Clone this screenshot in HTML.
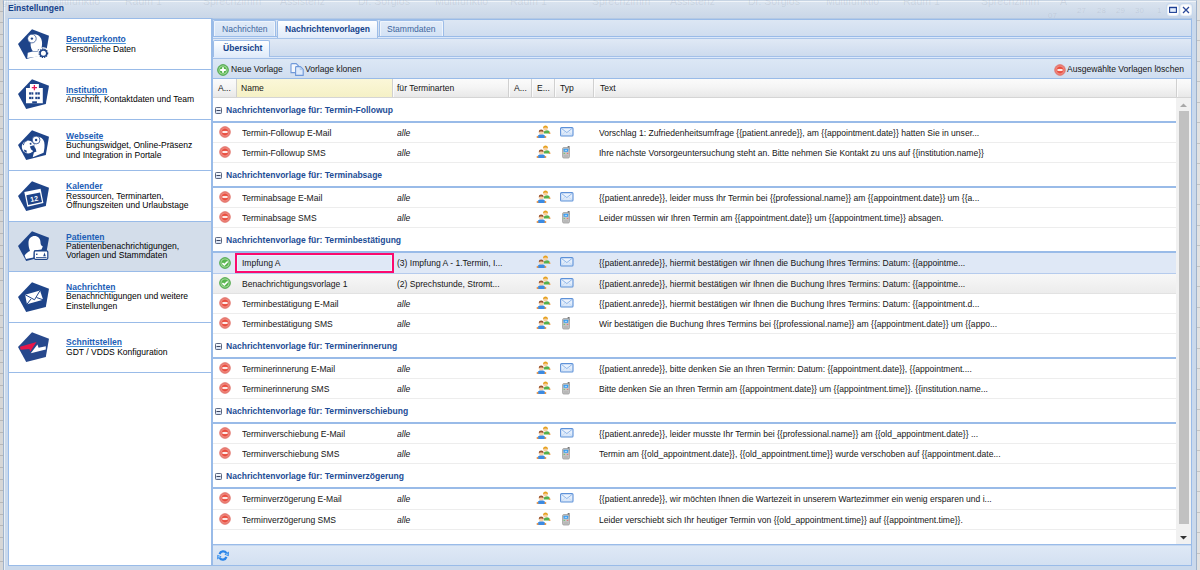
<!DOCTYPE html>
<html><head><meta charset="utf-8">
<style>
*{box-sizing:border-box;margin:0;padding:0}
html,body{width:1200px;height:570px;overflow:hidden}
body{position:relative;background:#dedede;font-family:"Liberation Sans",sans-serif;font-size:8.55px;color:#000}
#bgtxt{position:absolute;left:0;top:0;width:1200px;height:18px;overflow:hidden;pointer-events:none}
#bgtxt span{position:absolute;top:-5px;line-height:12px;font-size:10.5px;color:rgba(90,100,115,.13);white-space:nowrap}
#win{position:absolute;left:3px;top:0;width:1194px;height:590px;background:linear-gradient(rgba(218,228,240,.93),rgba(200,214,232,.95) 17px,#cad9ec 19px,#cad9ec);border:1px solid #9fb3cc;border-top-color:#c7d4e3;box-shadow:inset 1px 1px 0 rgba(255,255,255,.6)}
#title{position:absolute;left:4px;top:2px;font-weight:bold;color:#15428b;line-height:10px}
.tool{position:absolute;top:3px;width:12px;height:12px;border-radius:3px;background:#fff;box-shadow:0 0 0 1px #c7d8ee,inset 0 0 2px #bcd}
#left{position:absolute;left:8px;top:18px;width:204px;height:548px;background:#fff;border:1px solid #99bbe8;overflow:hidden}
.item{position:absolute;left:-1px;width:204px;border-bottom:1px solid #99bbe8}
.item.sel{background:#d3ddea}
.pic{position:absolute}
.ltxt{position:absolute;left:57px;line-height:10px;color:#000;white-space:nowrap}
.ltxt b{color:#1c5db6;text-decoration:underline;text-decoration-color:#4d94d8}
#right{position:absolute;left:212px;top:18px;width:980px;height:548px;border:1px solid #99bbe8;border-top-color:#b4c9e4;background:#fff}
.strip{position:absolute;left:0;width:978px}
.line{position:absolute;left:0;width:978px;height:1px}
.tab{position:absolute;border:1px solid #9dbde8;border-bottom:none;border-radius:2px 2px 0 0;background:linear-gradient(#e1ebf8,#d3e2f5);color:#3d66a0;line-height:10px;padding-top:3px;white-space:nowrap;box-shadow:inset 1px 1px 0 #eef4fc,inset -1px 0 0 #eef4fc}
.tab.act{background:linear-gradient(#ffffff,#edf4fd 50%,#e0ebfa);color:#15428b;font-weight:bold;box-shadow:none}
#tb{position:absolute;left:0;top:40px;width:978px;height:20px;background:linear-gradient(#dce7f5,#d0def0);border-bottom:1px solid #99bbe8}
.tbt{position:absolute;top:1px;height:19px;line-height:19px;color:#151515;white-space:nowrap}
#hd{position:absolute;left:0;top:60px;width:978px;height:19px;background:linear-gradient(#fbfbfb,#f5f5f5 45%,#e8e8e8);border-bottom:1px solid #d5d5d5}
.hc{position:absolute;top:0;height:18px;line-height:18px;padding-left:5px;color:#151515;border-right:1px solid #d0d0d0;box-shadow:1px 0 0 #fbfbfb;white-space:nowrap}
.hc.sort{background:linear-gradient(#fbf7d8,#f5f1c6)}
#body{position:absolute;left:0;top:79px;width:963px;height:446px;background:#fff;overflow:hidden}
.grp{position:absolute;left:0;width:963px;border-bottom:2px solid #99bbe8;color:#1d4d96;font-weight:bold}
.grp span{position:absolute;left:13px;line-height:10px;white-space:nowrap}
.coll{position:absolute;left:2px}
.ic0{position:absolute;left:6px;top:2.5px}
.row.sel .ic0{top:3.5px}
.ic4{position:absolute;left:323px;top:2px}
.ic5m{position:absolute;left:347px;top:4px}
.ic5s{position:absolute;left:349px;top:3px}
.row{position:absolute;left:0;width:963px;border-bottom:1px solid #ededed}
.row.sel{background:#dfe8f6;border-bottom-color:#b5cbed}
.row.hov{background:linear-gradient(#f7f7f7,#ececec);border-bottom-color:#e2e2e2}
.c{position:absolute;top:0;bottom:0;white-space:nowrap;overflow:hidden;display:flex;align-items:center;color:#151515}
.c0{left:0;width:24px;justify-content:center}
.c1{left:29px;width:150px}
.c2{left:184px;width:111px}
.c2.it{font-style:italic}
.c4{left:324px;width:14px;justify-content:center}
.c5{left:346px;width:14px;justify-content:center}
.c6{left:386px;width:576px}
.selbox{position:absolute;left:22px;top:0;width:159px;height:100%;border:2px solid #fb0a6e;box-shadow:inset 0 0 0 1px #e4f6fd}
#vs{position:absolute;left:963px;top:79px;width:15px;height:446px;background:#f1f1f1}
#pbar{position:absolute;left:0;top:525px;width:978px;height:21px;background:linear-gradient(#dfe9f6,#d3e0f1);border-top:1px solid #99bbe8;box-shadow:inset 0 1px 0 #c5d8f1}
</style></head><body>

<svg width="0" height="0" style="position:absolute"><defs>
<radialGradient id="rg" cx="50%" cy="50%" r="50%"><stop offset="0" stop-color="#f0705f"/><stop offset="0.5" stop-color="#e84a3c"/><stop offset="0.72" stop-color="#ef8a80"/><stop offset="1" stop-color="#e26a63"/></radialGradient>
<radialGradient id="gg" cx="50%" cy="50%" r="50%"><stop offset="0" stop-color="#5fbd55"/><stop offset="0.55" stop-color="#55b34b"/><stop offset="0.75" stop-color="#a3d99c"/><stop offset="1" stop-color="#52ac4c"/></radialGradient>
</defs></svg>
<div style="position:absolute;left:0;top:0;width:3px;height:570px;background:repeating-linear-gradient(#d6d6d6 0,#d6d6d6 10.7px,#b8b8b8 10.7px,#b8b8b8 11.7px)"></div>
<div style="position:absolute;left:1196px;top:0;width:4px;height:570px;background:repeating-linear-gradient(#e2e2e2 0,#e2e2e2 19.5px,#c4c4c4 19.5px,#c4c4c4 20.5px)"></div>
<div id="win">
  <div id="title">Einstellungen</div>
  <div class="tool" style="left:1163px"><svg width="12" height="12" viewBox="0 0 12 12"><rect x="2.6" y="3.4" width="6.8" height="5" fill="#e4eefc" stroke="#1c3f94" stroke-width="1.1"/><rect x="2.1" y="2.9" width="7.8" height="1.3" fill="#1c3f94"/></svg></div>
  <div class="tool" style="left:1176px"><svg width="12" height="12" viewBox="0 0 12 12"><path d="M3,3 L9,9 M9,3 L3,9" stroke="#2b4a9a" stroke-width="1.3"/></svg></div>
</div>

<div id="bgtxt"><span style="left:-31px">Dr. Sorglos</span><span style="left:47px">Multifunktio</span><span style="left:125px">Raum 1</span><span style="left:203px">Sprechzimm</span><span style="left:280px">Assistenz</span><span style="left:358px">Dr. Sorglos</span><span style="left:435px">Multifunktio</span><span style="left:510px">Raum 1</span><span style="left:592px">Sprechzimm</span><span style="left:670px">Assistenz</span><span style="left:748px">Dr. Sorglos</span><span style="left:826px">Multifunktio</span><span style="left:903px">Raum 1</span><span style="left:981px">Sprechzimm</span><span style="left:1060px">A</span><span style="left:1077px;top:5px;font-size:8px">27</span><span style="left:1097px;top:5px;font-size:8px">28</span><span style="left:1116px;top:5px;font-size:8px">29</span><span style="left:1135px;top:5px;font-size:8px">30</span><span style="left:1157px;top:5px;font-size:8px">1</span><span style="left:1048px;top:10px;font-size:8px">07</span></div>
<div id="left">
<div class="item" style="top:0px;height:51px"></div>
<svg class="pic" width="34" height="34" viewBox="0 0 34 34" style="left:8px;top:8.50px"><polygon points="15,1.3 32,7.7 28.8,26 9.2,31 1,16" fill="#1e4489"/>
  <path d="M14.5,6.6 C17.5,5.6 22.5,6.4 24.2,10.8 C25.5,14 25.2,18 24.4,20.5 L20.8,21.5 L20.8,23 L15.8,23 C14.6,21.6 13.4,19 13.6,15.5 Z" fill="#fff"/>
  <path d="M10.8,24.8 L15.6,23.4 L21.2,23.6 L21.2,28.5 L10.2,29.9 Z" fill="#fff"/>
  <circle cx="14.9" cy="10.6" r="4.3" fill="#fff" stroke="#1e4489" stroke-width="0.7"/>
  <circle cx="14.9" cy="10.6" r="1.2" fill="#1e4489"/>
  <circle cx="26.4" cy="25.2" r="5.9" fill="#fff"/>
  <circle cx="26.4" cy="25.2" r="4.1" fill="none" stroke="#1e4489" stroke-width="1.5" stroke-dasharray="1.3 0.9"/>
  <circle cx="26.4" cy="25.2" r="3.2" fill="none" stroke="#1e4489" stroke-width="1.4"/>
  <circle cx="26.4" cy="25.2" r="1.9" fill="#fff"/></svg>
<div class="ltxt" style="top:15px"><b>Benutzerkonto</b></div>
<div class="ltxt" style="top:25px">Persönliche Daten</div>
<div class="item" style="top:51px;height:50px"></div>
<svg class="pic" width="34" height="34" viewBox="0 0 34 34" style="left:8px;top:59.00px"><polygon points="15,1.3 32,7.7 28.8,26 9.2,31 1,16" fill="#1e4489"/>
  <path d="M12.9,5.9 H21.9 V10.1 H25.8 V25.3 H9 V10.1 H12.9 Z" fill="#fff"/>
  <path d="M17.4,7 V12.2 M14.8,9.6 H20" stroke="#e3175b" stroke-width="1.3"/>
  <rect x="12.1" y="14.3" width="4.2" height="2.3" fill="#1e4489"/><rect x="18.3" y="14.3" width="4.5" height="2.3" fill="#1e4489"/>
  <rect x="12.1" y="18.8" width="4.2" height="2.3" fill="#1e4489"/><rect x="18.3" y="18.8" width="4.5" height="2.3" fill="#1e4489"/>
  <rect x="14.1" y="14.3" width="0.4" height="6.8" fill="#fff"/><rect x="20.4" y="14.3" width="0.4" height="6.8" fill="#fff"/>
  <rect x="15.2" y="23.3" width="4.7" height="2" fill="#1e4489"/></svg>
<div class="ltxt" style="top:66px"><b>Institution</b></div>
<div class="ltxt" style="top:75px">Anschrift, Kontaktdaten und Team</div>
<div class="item" style="top:101px;height:51px"></div>
<svg class="pic" width="34" height="34" viewBox="0 0 34 34" style="left:8px;top:109.50px"><polygon points="15,1.3 32,7.7 28.8,26 9.2,31 1,16" fill="#1e4489"/>
  <path d="M17,8.6 C21,6.6 26,8.6 27.2,13 C28,17 27.3,21 26.6,23.8 L15.7,28.2 L16.9,23.6 L19.5,22.5 L17.5,17 Z" fill="#fff"/>
  <circle cx="11.2" cy="18" r="6.4" fill="#fff"/>
  <path d="M6.3,16.2 C6.8,14 8.2,12.4 10,11.6" fill="none" stroke="#1e4489" stroke-width="0.9"/>
  <path d="M12.6,14.2 L14.2,13.6 L14.6,15.4 L13,15.8 Z M12.8,17.6 L16.6,16.2 L18.8,20.8 L16.4,22.2 L14.2,20.6 Z M6.8,20.6 L9.6,21.6 L9.8,23.8 L7.6,23 Z" fill="#1e4489"/>
  <circle cx="19.1" cy="11" r="3.9" fill="#fff" stroke="#1e4489" stroke-width="0.8"/>
  <circle cx="19.1" cy="11" r="1.2" fill="#1e4489"/></svg>
<div class="ltxt" style="top:112px"><b>Webseite</b></div>
<div class="ltxt" style="top:121px">Buchungswidget, Online-Präsenz</div>
<div class="ltxt" style="top:131px">und Integration in Portale</div>
<div class="item" style="top:152px;height:51px"></div>
<svg class="pic" width="34" height="34" viewBox="0 0 34 34" style="left:8px;top:160.50px"><polygon points="15,1.3 32,7.7 28.8,26 9.2,31 1,16" fill="#1e4489"/>
  <polygon points="7.3,12.1 23.6,8.8 26.4,23.1 10.4,26.7" fill="#fff"/>
  <polygon points="9.3,15.2 23,12.4 25,22 11.2,25.1" fill="#1e4489"/>
  <text x="17.1" y="21.4" font-family="Liberation Sans" font-weight="bold" font-size="7" fill="#fff" text-anchor="middle" transform="rotate(-12 17 18.6)">12</text></svg>
<div class="ltxt" style="top:162px"><b>Kalender</b></div>
<div class="ltxt" style="top:172px">Ressourcen, Terminarten,</div>
<div class="ltxt" style="top:181px">Öffnungszeiten und Urlaubstage</div>
<div class="item sel" style="top:203px;height:50px"></div>
<svg class="pic" width="34" height="34" viewBox="0 0 34 34" style="left:8px;top:211.00px"><polygon points="15,1.3 32,7.7 28.8,26 9.2,31 1,16" fill="#1e4489"/>
  <path d="M11.5,13 C11.5,8 14.5,6 17.5,6 C21,6 23.5,8.5 23.5,12.5 C23.5,14 24,15.5 25.8,16.6 L24.5,19.5 L17,20.5 L16.5,27.5 L9,29 L7.6,25.5 C9.5,23 11.5,21.5 13,21 C12,18.5 11.5,16 11.5,13 Z" fill="#fff"/>
  <rect x="17.2" y="20.9" width="13.6" height="8.4" rx="1.2" fill="#fff" stroke="#1e4489" stroke-width="1.2"/>
  <rect x="19" y="23.6" width="1.5" height="1.3" fill="#1e4489"/>
  <path d="M27.5,22.6 L26.2,26.2 L28.8,26.2 Z" fill="#1e4489"/>
  <rect x="19" y="27.2" width="10.5" height="0.8" fill="#1e4489"/></svg>
<div class="ltxt" style="top:213px"><b>Patienten</b></div>
<div class="ltxt" style="top:222px">Patientenbenachrichtigungen,</div>
<div class="ltxt" style="top:231px">Vorlagen und Stammdaten</div>
<div class="item" style="top:253px;height:51px"></div>
<svg class="pic" width="34" height="34" viewBox="0 0 34 34" style="left:8px;top:261.50px"><polygon points="15,1.3 32,7.7 28.8,26 9.2,31 1,16" fill="#1e4489"/>
  <polygon points="8.1,13.7 23,9.6 26.1,18.8 10,23.2" fill="#fff"/>
  <path d="M8.1,13.7 L17.5,18.8 L23,9.6 M10,23.2 L14,18 M26.1,18.8 L19.5,16.5" fill="none" stroke="#1e4489" stroke-width="1"/></svg>
<div class="ltxt" style="top:263px"><b>Nachrichten</b></div>
<div class="ltxt" style="top:272px">Benachrichtigungen und weitere</div>
<div class="ltxt" style="top:282px">Einstellungen</div>
<div class="item" style="top:304px;height:50px"></div>
<svg class="pic" width="34" height="34" viewBox="0 0 34 34" style="left:8px;top:312.00px"><polygon points="15,1.3 32,7.7 28.8,26 9.2,31 1,16" fill="#27488c"/>
  <polygon points="3,15.8 19.5,11 13.2,20.5 12.4,18 3.6,18.8" fill="#e8174a"/>
  <polygon points="13.8,22.2 20.4,13.6 21.6,16.7 28.8,15.2 28.8,18.5" fill="#fff"/></svg>
<div class="ltxt" style="top:318px"><b>Schnittstellen</b></div>
<div class="ltxt" style="top:328px">GDT / VDDS Konfiguration</div>
</div>

<div id="right">
  <div class="strip" style="top:0;height:40px;background:linear-gradient(#dde7f4,#cfddef 17px,#e0e9f5 20px,#cddbee 37px)"></div>
  <div class="line" style="top:0;background:#99bbe8"></div>
  <div class="line" style="top:17px;background:#99bbe8"></div>
  <div class="line" style="top:18px;background:#dce8f9"></div>
  <div class="line" style="top:19px;background:#a9c5ea"></div>
  <div class="line" style="top:37px;background:#a3c0e8"></div>
  <div class="line" style="top:38px;background:#dde9fb"></div>
  <div class="line" style="top:39px;background:#a3c0e8"></div>
  <div class="tab" style="left:0;top:1px;width:63px;height:17px;padding-left:8px;border-bottom:1px solid #99bbe8">Nachrichten</div>
  <div class="tab act" style="left:64px;top:1px;width:101px;height:18px;padding-left:7px">Nachrichtenvorlagen</div>
  <div class="tab" style="left:166px;top:1px;width:65px;height:17px;padding-left:7px;border-bottom:1px solid #99bbe8">Stammdaten</div>
  <div class="tab act" style="left:0;top:21px;width:57px;height:17px;padding-left:9px;padding-top:2px">Übersicht</div>
  <div id="tb">
    <svg class="pic" width="12" height="12" viewBox="0 0 12 12" style="left:4px;top:5px"><circle cx="6" cy="6" r="5.4" fill="url(#gg)" stroke="#47a443" stroke-width="0.8"/><path d="M6,3.2 V8.8 M3.2,6 H8.8" stroke="#fff" stroke-width="1.8"/></svg>
    <div class="tbt" style="left:18px">Neue Vorlage</div>
    <svg class="pic" width="15" height="14" viewBox="0 0 15 14" style="left:77px;top:4px"><path d="M1,9.6 V1.6 Q1,0.6 2,0.6 H6.2 L8.4,2.8 V9.6 Z" fill="#f3f7fd" stroke="#7099d9" stroke-width="1.1"/><path d="M5.6,12.4 V4.4 Q5.6,3.6 6.4,3.6 H10.4 L13.2,6.4 V12.4 Z" fill="#deeafb" stroke="#6d97d8" stroke-width="1.1"/><path d="M10.2,3.8 V6.6 H13" fill="none" stroke="#9fbfea" stroke-width="0.8"/></svg>
    <div class="tbt" style="left:92px">Vorlage klonen</div>
    <svg class="pic" width="12" height="12" viewBox="0 0 12 12" style="left:841px;top:5px"><circle cx="6" cy="6" r="5.4" fill="url(#rg)" stroke="#e3776f" stroke-width="0.7"/><rect x="3.4" y="5.15" width="5.2" height="1.7" fill="#fff"/></svg>
    <div class="tbt" style="left:854px">Ausgewählte Vorlagen löschen</div>
  </div>
  <div id="hd">
    <div class="hc" style="left:0;width:24px">A...</div>
    <div class="hc sort" style="left:24px;width:156px;padding-left:4px">Name</div>
    <div class="hc" style="left:180px;width:116px;padding-left:4px">für Terminarten</div>
    <div class="hc" style="left:296px;width:23px">A...</div>
    <div class="hc" style="left:319px;width:23px">E...</div>
    <div class="hc" style="left:342px;width:39px">Typ</div>
    <div class="hc" style="left:381px;width:583px;padding-left:6px">Text</div>
  </div>
  <div id="body">
<div class="grp" style="top:0px;height:25px"><svg class="coll" width="7" height="7" viewBox="0 0 7 7" style="top:9px"><defs><linearGradient id="cg" x1="0" y1="0" x2="0" y2="1"><stop offset="0" stop-color="#fbfcfe"/><stop offset="1" stop-color="#cfdcf3"/></linearGradient></defs><rect x="0.5" y="0.5" width="6" height="6" rx="0.8" fill="url(#cg)" stroke="#5b6781"/><rect x="1.5" y="3" width="4" height="1" fill="#3c4660"/></svg><span style="top:7px">Nachrichtenvorlage für: Termin-Followup</span></div>
<div class="row " style="top:25px;height:20px"><svg class="ic0" width="12" height="12" viewBox="0 0 12 12"><circle cx="6" cy="6" r="5.4" fill="url(#rg)" stroke="#e3776f" stroke-width="0.7"/><rect x="3.4" y="5.15" width="5.2" height="1.7" fill="#fff"/></svg><div class="c c1"><span>Termin-Followup E-Mail</span></div><div class="c c2 ta it"><span>alle</span></div><svg class="ic4" width="15" height="14" viewBox="0 0 15 14"><path d="M7.6,8.5 C7.6,6.2 8.8,5.3 10.8,5.3 C12.8,5.3 14,6.2 14,8.5 Z" fill="#56b04d"/><circle cx="13.6" cy="8.2" r="0.9" fill="#f0a050"/><circle cx="9.5" cy="3.2" r="2.3" fill="#f8cf9f"/><path d="M7.1,3.2 C7,1.3 8.2,0.5 9.5,0.5 C10.9,0.5 12,1.3 11.9,3.2 C11,2.2 8.2,2.2 7.1,3.2Z" fill="#e5a11f"/><path d="M1.2,13 C1.2,10.4 2.8,9.2 5.4,9.2 C8,9.2 9.7,10.4 9.7,13 Z" fill="#3b8be3"/><circle cx="1.5" cy="12" r="1" fill="#ef9746"/><circle cx="9.4" cy="12" r="1" fill="#ef9746"/><circle cx="5.2" cy="7.3" r="2.3" fill="#f9d0a4"/><path d="M2.8,7.3 C2.7,5.3 3.9,4.6 5.2,4.6 C6.6,4.6 7.7,5.3 7.6,7.3 C6.8,6.2 3.8,6.2 2.8,7.3Z" fill="#98532e"/></svg><svg class="ic5m" width="14" height="10" viewBox="0 0 14 10"><defs><linearGradient id="mg" x1="0" y1="0" x2="0" y2="1"><stop offset="0" stop-color="#f2f7fe"/><stop offset="1" stop-color="#d4e4f8"/></linearGradient></defs><rect x="0.6" y="0.6" width="12.4" height="8.4" rx="1" fill="url(#mg)" stroke="#5d91d8" stroke-width="1.1"/><path d="M1.3,1.3 L6.8,5.6 L12.3,1.3" fill="none" stroke="#86b0e6" stroke-width="0.9"/><path d="M1.3,8.4 L5,5 M12.3,8.4 L8.6,5" fill="none" stroke="#b9d2f2" stroke-width="0.6"/></svg><div class="c c6"><span>Vorschlag 1: Zufriedenheitsumfrage {{patient.anrede}}, am {{appointment.date}} hatten Sie in unser...</span></div></div>
<div class="row " style="top:45px;height:20px"><svg class="ic0" width="12" height="12" viewBox="0 0 12 12"><circle cx="6" cy="6" r="5.4" fill="url(#rg)" stroke="#e3776f" stroke-width="0.7"/><rect x="3.4" y="5.15" width="5.2" height="1.7" fill="#fff"/></svg><div class="c c1"><span>Termin-Followup SMS</span></div><div class="c c2 ta it"><span>alle</span></div><svg class="ic4" width="15" height="14" viewBox="0 0 15 14"><path d="M7.6,8.5 C7.6,6.2 8.8,5.3 10.8,5.3 C12.8,5.3 14,6.2 14,8.5 Z" fill="#56b04d"/><circle cx="13.6" cy="8.2" r="0.9" fill="#f0a050"/><circle cx="9.5" cy="3.2" r="2.3" fill="#f8cf9f"/><path d="M7.1,3.2 C7,1.3 8.2,0.5 9.5,0.5 C10.9,0.5 12,1.3 11.9,3.2 C11,2.2 8.2,2.2 7.1,3.2Z" fill="#e5a11f"/><path d="M1.2,13 C1.2,10.4 2.8,9.2 5.4,9.2 C8,9.2 9.7,10.4 9.7,13 Z" fill="#3b8be3"/><circle cx="1.5" cy="12" r="1" fill="#ef9746"/><circle cx="9.4" cy="12" r="1" fill="#ef9746"/><circle cx="5.2" cy="7.3" r="2.3" fill="#f9d0a4"/><path d="M2.8,7.3 C2.7,5.3 3.9,4.6 5.2,4.6 C6.6,4.6 7.7,5.3 7.6,7.3 C6.8,6.2 3.8,6.2 2.8,7.3Z" fill="#98532e"/></svg><svg class="ic5s" width="8" height="13" viewBox="0 0 8 13"><rect x="5.6" y="0" width="2" height="3.5" rx="0.5" fill="#777"/><rect x="0.6" y="1.6" width="6.8" height="10.4" rx="1.2" fill="#c6c6c6" stroke="#8e8e8e" stroke-width="0.7"/><rect x="1.6" y="2.8" width="4.6" height="3" rx="0.4" fill="#3b9ff2"/><rect x="2.8" y="3.9" width="2.2" height="0.8" fill="#d6ecff"/><rect x="1.6" y="6.9" width="1.5" height="0.9" fill="#66c466"/><rect x="4.8" y="6.9" width="1.5" height="0.9" fill="#e86868"/><rect x="1.6" y="8.7" width="4.6" height="2.3" fill="#b8b8b8"/></svg><div class="c c6"><span>Ihre nächste Vorsorgeuntersuchung steht an. Bitte nehmen Sie Kontakt zu uns auf {{institution.name}}</span></div></div>
<div class="grp" style="top:65px;height:25px"><svg class="coll" width="7" height="7" viewBox="0 0 7 7" style="top:9px"><defs><linearGradient id="cg" x1="0" y1="0" x2="0" y2="1"><stop offset="0" stop-color="#fbfcfe"/><stop offset="1" stop-color="#cfdcf3"/></linearGradient></defs><rect x="0.5" y="0.5" width="6" height="6" rx="0.8" fill="url(#cg)" stroke="#5b6781"/><rect x="1.5" y="3" width="4" height="1" fill="#3c4660"/></svg><span style="top:7px">Nachrichtenvorlage für: Terminabsage</span></div>
<div class="row " style="top:90px;height:20px"><svg class="ic0" width="12" height="12" viewBox="0 0 12 12"><circle cx="6" cy="6" r="5.4" fill="url(#rg)" stroke="#e3776f" stroke-width="0.7"/><rect x="3.4" y="5.15" width="5.2" height="1.7" fill="#fff"/></svg><div class="c c1"><span>Terminabsage E-Mail</span></div><div class="c c2 ta it"><span>alle</span></div><svg class="ic4" width="15" height="14" viewBox="0 0 15 14"><path d="M7.6,8.5 C7.6,6.2 8.8,5.3 10.8,5.3 C12.8,5.3 14,6.2 14,8.5 Z" fill="#56b04d"/><circle cx="13.6" cy="8.2" r="0.9" fill="#f0a050"/><circle cx="9.5" cy="3.2" r="2.3" fill="#f8cf9f"/><path d="M7.1,3.2 C7,1.3 8.2,0.5 9.5,0.5 C10.9,0.5 12,1.3 11.9,3.2 C11,2.2 8.2,2.2 7.1,3.2Z" fill="#e5a11f"/><path d="M1.2,13 C1.2,10.4 2.8,9.2 5.4,9.2 C8,9.2 9.7,10.4 9.7,13 Z" fill="#3b8be3"/><circle cx="1.5" cy="12" r="1" fill="#ef9746"/><circle cx="9.4" cy="12" r="1" fill="#ef9746"/><circle cx="5.2" cy="7.3" r="2.3" fill="#f9d0a4"/><path d="M2.8,7.3 C2.7,5.3 3.9,4.6 5.2,4.6 C6.6,4.6 7.7,5.3 7.6,7.3 C6.8,6.2 3.8,6.2 2.8,7.3Z" fill="#98532e"/></svg><svg class="ic5m" width="14" height="10" viewBox="0 0 14 10"><defs><linearGradient id="mg" x1="0" y1="0" x2="0" y2="1"><stop offset="0" stop-color="#f2f7fe"/><stop offset="1" stop-color="#d4e4f8"/></linearGradient></defs><rect x="0.6" y="0.6" width="12.4" height="8.4" rx="1" fill="url(#mg)" stroke="#5d91d8" stroke-width="1.1"/><path d="M1.3,1.3 L6.8,5.6 L12.3,1.3" fill="none" stroke="#86b0e6" stroke-width="0.9"/><path d="M1.3,8.4 L5,5 M12.3,8.4 L8.6,5" fill="none" stroke="#b9d2f2" stroke-width="0.6"/></svg><div class="c c6"><span>{{patient.anrede}}, leider muss Ihr Termin bei {{professional.name}} am {{appointment.date}} um {{a...</span></div></div>
<div class="row " style="top:110px;height:20px"><svg class="ic0" width="12" height="12" viewBox="0 0 12 12"><circle cx="6" cy="6" r="5.4" fill="url(#rg)" stroke="#e3776f" stroke-width="0.7"/><rect x="3.4" y="5.15" width="5.2" height="1.7" fill="#fff"/></svg><div class="c c1"><span>Terminabsage SMS</span></div><div class="c c2 ta it"><span>alle</span></div><svg class="ic4" width="15" height="14" viewBox="0 0 15 14"><path d="M7.6,8.5 C7.6,6.2 8.8,5.3 10.8,5.3 C12.8,5.3 14,6.2 14,8.5 Z" fill="#56b04d"/><circle cx="13.6" cy="8.2" r="0.9" fill="#f0a050"/><circle cx="9.5" cy="3.2" r="2.3" fill="#f8cf9f"/><path d="M7.1,3.2 C7,1.3 8.2,0.5 9.5,0.5 C10.9,0.5 12,1.3 11.9,3.2 C11,2.2 8.2,2.2 7.1,3.2Z" fill="#e5a11f"/><path d="M1.2,13 C1.2,10.4 2.8,9.2 5.4,9.2 C8,9.2 9.7,10.4 9.7,13 Z" fill="#3b8be3"/><circle cx="1.5" cy="12" r="1" fill="#ef9746"/><circle cx="9.4" cy="12" r="1" fill="#ef9746"/><circle cx="5.2" cy="7.3" r="2.3" fill="#f9d0a4"/><path d="M2.8,7.3 C2.7,5.3 3.9,4.6 5.2,4.6 C6.6,4.6 7.7,5.3 7.6,7.3 C6.8,6.2 3.8,6.2 2.8,7.3Z" fill="#98532e"/></svg><svg class="ic5s" width="8" height="13" viewBox="0 0 8 13"><rect x="5.6" y="0" width="2" height="3.5" rx="0.5" fill="#777"/><rect x="0.6" y="1.6" width="6.8" height="10.4" rx="1.2" fill="#c6c6c6" stroke="#8e8e8e" stroke-width="0.7"/><rect x="1.6" y="2.8" width="4.6" height="3" rx="0.4" fill="#3b9ff2"/><rect x="2.8" y="3.9" width="2.2" height="0.8" fill="#d6ecff"/><rect x="1.6" y="6.9" width="1.5" height="0.9" fill="#66c466"/><rect x="4.8" y="6.9" width="1.5" height="0.9" fill="#e86868"/><rect x="1.6" y="8.7" width="4.6" height="2.3" fill="#b8b8b8"/></svg><div class="c c6"><span>Leider müssen wir Ihren Termin am {{appointment.date}} um {{appointment.time}} absagen.</span></div></div>
<div class="grp" style="top:130px;height:25px"><svg class="coll" width="7" height="7" viewBox="0 0 7 7" style="top:9px"><defs><linearGradient id="cg" x1="0" y1="0" x2="0" y2="1"><stop offset="0" stop-color="#fbfcfe"/><stop offset="1" stop-color="#cfdcf3"/></linearGradient></defs><rect x="0.5" y="0.5" width="6" height="6" rx="0.8" fill="url(#cg)" stroke="#5b6781"/><rect x="1.5" y="3" width="4" height="1" fill="#3c4660"/></svg><span style="top:7px">Nachrichtenvorlage für: Terminbestätigung</span></div>
<div class="row sel" style="top:155px;height:21px"><svg class="ic0" width="12" height="12" viewBox="0 0 12 12"><circle cx="6" cy="6" r="5.4" fill="url(#gg)" stroke="#47a443" stroke-width="0.8"/><path d="M3.4,6.1 L5.3,7.9 L8.7,4.5" fill="none" stroke="#fff" stroke-width="1.6"/></svg><div class="c c1"><span>Impfung A</span></div><div class="c c2 ta"><span>(3) Impfung A - 1.Termin, I...</span></div><svg class="ic4" width="15" height="14" viewBox="0 0 15 14"><path d="M7.6,8.5 C7.6,6.2 8.8,5.3 10.8,5.3 C12.8,5.3 14,6.2 14,8.5 Z" fill="#56b04d"/><circle cx="13.6" cy="8.2" r="0.9" fill="#f0a050"/><circle cx="9.5" cy="3.2" r="2.3" fill="#f8cf9f"/><path d="M7.1,3.2 C7,1.3 8.2,0.5 9.5,0.5 C10.9,0.5 12,1.3 11.9,3.2 C11,2.2 8.2,2.2 7.1,3.2Z" fill="#e5a11f"/><path d="M1.2,13 C1.2,10.4 2.8,9.2 5.4,9.2 C8,9.2 9.7,10.4 9.7,13 Z" fill="#3b8be3"/><circle cx="1.5" cy="12" r="1" fill="#ef9746"/><circle cx="9.4" cy="12" r="1" fill="#ef9746"/><circle cx="5.2" cy="7.3" r="2.3" fill="#f9d0a4"/><path d="M2.8,7.3 C2.7,5.3 3.9,4.6 5.2,4.6 C6.6,4.6 7.7,5.3 7.6,7.3 C6.8,6.2 3.8,6.2 2.8,7.3Z" fill="#98532e"/></svg><svg class="ic5m" width="14" height="10" viewBox="0 0 14 10"><defs><linearGradient id="mg" x1="0" y1="0" x2="0" y2="1"><stop offset="0" stop-color="#f2f7fe"/><stop offset="1" stop-color="#d4e4f8"/></linearGradient></defs><rect x="0.6" y="0.6" width="12.4" height="8.4" rx="1" fill="url(#mg)" stroke="#5d91d8" stroke-width="1.1"/><path d="M1.3,1.3 L6.8,5.6 L12.3,1.3" fill="none" stroke="#86b0e6" stroke-width="0.9"/><path d="M1.3,8.4 L5,5 M12.3,8.4 L8.6,5" fill="none" stroke="#b9d2f2" stroke-width="0.6"/></svg><div class="c c6"><span>{{patient.anrede}}, hiermit bestätigen wir Ihnen die Buchung Ihres Termins: Datum: {{appointme...</span></div><div class="selbox"></div></div>
<div class="row hov" style="top:176px;height:20px"><svg class="ic0" width="12" height="12" viewBox="0 0 12 12"><circle cx="6" cy="6" r="5.4" fill="url(#gg)" stroke="#47a443" stroke-width="0.8"/><path d="M3.4,6.1 L5.3,7.9 L8.7,4.5" fill="none" stroke="#fff" stroke-width="1.6"/></svg><div class="c c1"><span>Benachrichtigungsvorlage 1</span></div><div class="c c2 ta"><span>(2) Sprechstunde, Stromt...</span></div><svg class="ic4" width="15" height="14" viewBox="0 0 15 14"><path d="M7.6,8.5 C7.6,6.2 8.8,5.3 10.8,5.3 C12.8,5.3 14,6.2 14,8.5 Z" fill="#56b04d"/><circle cx="13.6" cy="8.2" r="0.9" fill="#f0a050"/><circle cx="9.5" cy="3.2" r="2.3" fill="#f8cf9f"/><path d="M7.1,3.2 C7,1.3 8.2,0.5 9.5,0.5 C10.9,0.5 12,1.3 11.9,3.2 C11,2.2 8.2,2.2 7.1,3.2Z" fill="#e5a11f"/><path d="M1.2,13 C1.2,10.4 2.8,9.2 5.4,9.2 C8,9.2 9.7,10.4 9.7,13 Z" fill="#3b8be3"/><circle cx="1.5" cy="12" r="1" fill="#ef9746"/><circle cx="9.4" cy="12" r="1" fill="#ef9746"/><circle cx="5.2" cy="7.3" r="2.3" fill="#f9d0a4"/><path d="M2.8,7.3 C2.7,5.3 3.9,4.6 5.2,4.6 C6.6,4.6 7.7,5.3 7.6,7.3 C6.8,6.2 3.8,6.2 2.8,7.3Z" fill="#98532e"/></svg><svg class="ic5m" width="14" height="10" viewBox="0 0 14 10"><defs><linearGradient id="mg" x1="0" y1="0" x2="0" y2="1"><stop offset="0" stop-color="#f2f7fe"/><stop offset="1" stop-color="#d4e4f8"/></linearGradient></defs><rect x="0.6" y="0.6" width="12.4" height="8.4" rx="1" fill="url(#mg)" stroke="#5d91d8" stroke-width="1.1"/><path d="M1.3,1.3 L6.8,5.6 L12.3,1.3" fill="none" stroke="#86b0e6" stroke-width="0.9"/><path d="M1.3,8.4 L5,5 M12.3,8.4 L8.6,5" fill="none" stroke="#b9d2f2" stroke-width="0.6"/></svg><div class="c c6"><span>{{patient.anrede}}, hiermit bestätigen wir Ihnen die Buchung Ihres Termins: Datum: {{appointme...</span></div></div>
<div class="row " style="top:196px;height:20px"><svg class="ic0" width="12" height="12" viewBox="0 0 12 12"><circle cx="6" cy="6" r="5.4" fill="url(#rg)" stroke="#e3776f" stroke-width="0.7"/><rect x="3.4" y="5.15" width="5.2" height="1.7" fill="#fff"/></svg><div class="c c1"><span>Terminbestätigung E-Mail</span></div><div class="c c2 ta it"><span>alle</span></div><svg class="ic4" width="15" height="14" viewBox="0 0 15 14"><path d="M7.6,8.5 C7.6,6.2 8.8,5.3 10.8,5.3 C12.8,5.3 14,6.2 14,8.5 Z" fill="#56b04d"/><circle cx="13.6" cy="8.2" r="0.9" fill="#f0a050"/><circle cx="9.5" cy="3.2" r="2.3" fill="#f8cf9f"/><path d="M7.1,3.2 C7,1.3 8.2,0.5 9.5,0.5 C10.9,0.5 12,1.3 11.9,3.2 C11,2.2 8.2,2.2 7.1,3.2Z" fill="#e5a11f"/><path d="M1.2,13 C1.2,10.4 2.8,9.2 5.4,9.2 C8,9.2 9.7,10.4 9.7,13 Z" fill="#3b8be3"/><circle cx="1.5" cy="12" r="1" fill="#ef9746"/><circle cx="9.4" cy="12" r="1" fill="#ef9746"/><circle cx="5.2" cy="7.3" r="2.3" fill="#f9d0a4"/><path d="M2.8,7.3 C2.7,5.3 3.9,4.6 5.2,4.6 C6.6,4.6 7.7,5.3 7.6,7.3 C6.8,6.2 3.8,6.2 2.8,7.3Z" fill="#98532e"/></svg><svg class="ic5m" width="14" height="10" viewBox="0 0 14 10"><defs><linearGradient id="mg" x1="0" y1="0" x2="0" y2="1"><stop offset="0" stop-color="#f2f7fe"/><stop offset="1" stop-color="#d4e4f8"/></linearGradient></defs><rect x="0.6" y="0.6" width="12.4" height="8.4" rx="1" fill="url(#mg)" stroke="#5d91d8" stroke-width="1.1"/><path d="M1.3,1.3 L6.8,5.6 L12.3,1.3" fill="none" stroke="#86b0e6" stroke-width="0.9"/><path d="M1.3,8.4 L5,5 M12.3,8.4 L8.6,5" fill="none" stroke="#b9d2f2" stroke-width="0.6"/></svg><div class="c c6"><span>{{patient.anrede}}, hiermit bestätigen wir Ihnen die Buchung Ihres Termins: Datum: {{appointment.d...</span></div></div>
<div class="row " style="top:216px;height:20px"><svg class="ic0" width="12" height="12" viewBox="0 0 12 12"><circle cx="6" cy="6" r="5.4" fill="url(#rg)" stroke="#e3776f" stroke-width="0.7"/><rect x="3.4" y="5.15" width="5.2" height="1.7" fill="#fff"/></svg><div class="c c1"><span>Terminbestätigung SMS</span></div><div class="c c2 ta it"><span>alle</span></div><svg class="ic4" width="15" height="14" viewBox="0 0 15 14"><path d="M7.6,8.5 C7.6,6.2 8.8,5.3 10.8,5.3 C12.8,5.3 14,6.2 14,8.5 Z" fill="#56b04d"/><circle cx="13.6" cy="8.2" r="0.9" fill="#f0a050"/><circle cx="9.5" cy="3.2" r="2.3" fill="#f8cf9f"/><path d="M7.1,3.2 C7,1.3 8.2,0.5 9.5,0.5 C10.9,0.5 12,1.3 11.9,3.2 C11,2.2 8.2,2.2 7.1,3.2Z" fill="#e5a11f"/><path d="M1.2,13 C1.2,10.4 2.8,9.2 5.4,9.2 C8,9.2 9.7,10.4 9.7,13 Z" fill="#3b8be3"/><circle cx="1.5" cy="12" r="1" fill="#ef9746"/><circle cx="9.4" cy="12" r="1" fill="#ef9746"/><circle cx="5.2" cy="7.3" r="2.3" fill="#f9d0a4"/><path d="M2.8,7.3 C2.7,5.3 3.9,4.6 5.2,4.6 C6.6,4.6 7.7,5.3 7.6,7.3 C6.8,6.2 3.8,6.2 2.8,7.3Z" fill="#98532e"/></svg><svg class="ic5s" width="8" height="13" viewBox="0 0 8 13"><rect x="5.6" y="0" width="2" height="3.5" rx="0.5" fill="#777"/><rect x="0.6" y="1.6" width="6.8" height="10.4" rx="1.2" fill="#c6c6c6" stroke="#8e8e8e" stroke-width="0.7"/><rect x="1.6" y="2.8" width="4.6" height="3" rx="0.4" fill="#3b9ff2"/><rect x="2.8" y="3.9" width="2.2" height="0.8" fill="#d6ecff"/><rect x="1.6" y="6.9" width="1.5" height="0.9" fill="#66c466"/><rect x="4.8" y="6.9" width="1.5" height="0.9" fill="#e86868"/><rect x="1.6" y="8.7" width="4.6" height="2.3" fill="#b8b8b8"/></svg><div class="c c6"><span>Wir bestätigen die Buchung Ihres Termins bei {{professional.name}} am {{appointment.date}} um {{appo...</span></div></div>
<div class="grp" style="top:236px;height:25px"><svg class="coll" width="7" height="7" viewBox="0 0 7 7" style="top:9px"><defs><linearGradient id="cg" x1="0" y1="0" x2="0" y2="1"><stop offset="0" stop-color="#fbfcfe"/><stop offset="1" stop-color="#cfdcf3"/></linearGradient></defs><rect x="0.5" y="0.5" width="6" height="6" rx="0.8" fill="url(#cg)" stroke="#5b6781"/><rect x="1.5" y="3" width="4" height="1" fill="#3c4660"/></svg><span style="top:7px">Nachrichtenvorlage für: Terminerinnerung</span></div>
<div class="row " style="top:261px;height:20px"><svg class="ic0" width="12" height="12" viewBox="0 0 12 12"><circle cx="6" cy="6" r="5.4" fill="url(#rg)" stroke="#e3776f" stroke-width="0.7"/><rect x="3.4" y="5.15" width="5.2" height="1.7" fill="#fff"/></svg><div class="c c1"><span>Terminerinnerung E-Mail</span></div><div class="c c2 ta it"><span>alle</span></div><svg class="ic4" width="15" height="14" viewBox="0 0 15 14"><path d="M7.6,8.5 C7.6,6.2 8.8,5.3 10.8,5.3 C12.8,5.3 14,6.2 14,8.5 Z" fill="#56b04d"/><circle cx="13.6" cy="8.2" r="0.9" fill="#f0a050"/><circle cx="9.5" cy="3.2" r="2.3" fill="#f8cf9f"/><path d="M7.1,3.2 C7,1.3 8.2,0.5 9.5,0.5 C10.9,0.5 12,1.3 11.9,3.2 C11,2.2 8.2,2.2 7.1,3.2Z" fill="#e5a11f"/><path d="M1.2,13 C1.2,10.4 2.8,9.2 5.4,9.2 C8,9.2 9.7,10.4 9.7,13 Z" fill="#3b8be3"/><circle cx="1.5" cy="12" r="1" fill="#ef9746"/><circle cx="9.4" cy="12" r="1" fill="#ef9746"/><circle cx="5.2" cy="7.3" r="2.3" fill="#f9d0a4"/><path d="M2.8,7.3 C2.7,5.3 3.9,4.6 5.2,4.6 C6.6,4.6 7.7,5.3 7.6,7.3 C6.8,6.2 3.8,6.2 2.8,7.3Z" fill="#98532e"/></svg><svg class="ic5m" width="14" height="10" viewBox="0 0 14 10"><defs><linearGradient id="mg" x1="0" y1="0" x2="0" y2="1"><stop offset="0" stop-color="#f2f7fe"/><stop offset="1" stop-color="#d4e4f8"/></linearGradient></defs><rect x="0.6" y="0.6" width="12.4" height="8.4" rx="1" fill="url(#mg)" stroke="#5d91d8" stroke-width="1.1"/><path d="M1.3,1.3 L6.8,5.6 L12.3,1.3" fill="none" stroke="#86b0e6" stroke-width="0.9"/><path d="M1.3,8.4 L5,5 M12.3,8.4 L8.6,5" fill="none" stroke="#b9d2f2" stroke-width="0.6"/></svg><div class="c c6"><span>{{patient.anrede}}, bitte denken Sie an Ihren Termin: Datum: {{appointment.date}}, {{appointment....</span></div></div>
<div class="row " style="top:281px;height:20px"><svg class="ic0" width="12" height="12" viewBox="0 0 12 12"><circle cx="6" cy="6" r="5.4" fill="url(#rg)" stroke="#e3776f" stroke-width="0.7"/><rect x="3.4" y="5.15" width="5.2" height="1.7" fill="#fff"/></svg><div class="c c1"><span>Terminerinnerung SMS</span></div><div class="c c2 ta it"><span>alle</span></div><svg class="ic4" width="15" height="14" viewBox="0 0 15 14"><path d="M7.6,8.5 C7.6,6.2 8.8,5.3 10.8,5.3 C12.8,5.3 14,6.2 14,8.5 Z" fill="#56b04d"/><circle cx="13.6" cy="8.2" r="0.9" fill="#f0a050"/><circle cx="9.5" cy="3.2" r="2.3" fill="#f8cf9f"/><path d="M7.1,3.2 C7,1.3 8.2,0.5 9.5,0.5 C10.9,0.5 12,1.3 11.9,3.2 C11,2.2 8.2,2.2 7.1,3.2Z" fill="#e5a11f"/><path d="M1.2,13 C1.2,10.4 2.8,9.2 5.4,9.2 C8,9.2 9.7,10.4 9.7,13 Z" fill="#3b8be3"/><circle cx="1.5" cy="12" r="1" fill="#ef9746"/><circle cx="9.4" cy="12" r="1" fill="#ef9746"/><circle cx="5.2" cy="7.3" r="2.3" fill="#f9d0a4"/><path d="M2.8,7.3 C2.7,5.3 3.9,4.6 5.2,4.6 C6.6,4.6 7.7,5.3 7.6,7.3 C6.8,6.2 3.8,6.2 2.8,7.3Z" fill="#98532e"/></svg><svg class="ic5s" width="8" height="13" viewBox="0 0 8 13"><rect x="5.6" y="0" width="2" height="3.5" rx="0.5" fill="#777"/><rect x="0.6" y="1.6" width="6.8" height="10.4" rx="1.2" fill="#c6c6c6" stroke="#8e8e8e" stroke-width="0.7"/><rect x="1.6" y="2.8" width="4.6" height="3" rx="0.4" fill="#3b9ff2"/><rect x="2.8" y="3.9" width="2.2" height="0.8" fill="#d6ecff"/><rect x="1.6" y="6.9" width="1.5" height="0.9" fill="#66c466"/><rect x="4.8" y="6.9" width="1.5" height="0.9" fill="#e86868"/><rect x="1.6" y="8.7" width="4.6" height="2.3" fill="#b8b8b8"/></svg><div class="c c6"><span>Bitte denken Sie an Ihren Termin am {{appointment.date}} um {{appointment.time}}. {{institution.name...</span></div></div>
<div class="grp" style="top:301px;height:25px"><svg class="coll" width="7" height="7" viewBox="0 0 7 7" style="top:9px"><defs><linearGradient id="cg" x1="0" y1="0" x2="0" y2="1"><stop offset="0" stop-color="#fbfcfe"/><stop offset="1" stop-color="#cfdcf3"/></linearGradient></defs><rect x="0.5" y="0.5" width="6" height="6" rx="0.8" fill="url(#cg)" stroke="#5b6781"/><rect x="1.5" y="3" width="4" height="1" fill="#3c4660"/></svg><span style="top:7px">Nachrichtenvorlage für: Terminverschiebung</span></div>
<div class="row " style="top:326px;height:20px"><svg class="ic0" width="12" height="12" viewBox="0 0 12 12"><circle cx="6" cy="6" r="5.4" fill="url(#rg)" stroke="#e3776f" stroke-width="0.7"/><rect x="3.4" y="5.15" width="5.2" height="1.7" fill="#fff"/></svg><div class="c c1"><span>Terminverschiebung E-Mail</span></div><div class="c c2 ta it"><span>alle</span></div><svg class="ic4" width="15" height="14" viewBox="0 0 15 14"><path d="M7.6,8.5 C7.6,6.2 8.8,5.3 10.8,5.3 C12.8,5.3 14,6.2 14,8.5 Z" fill="#56b04d"/><circle cx="13.6" cy="8.2" r="0.9" fill="#f0a050"/><circle cx="9.5" cy="3.2" r="2.3" fill="#f8cf9f"/><path d="M7.1,3.2 C7,1.3 8.2,0.5 9.5,0.5 C10.9,0.5 12,1.3 11.9,3.2 C11,2.2 8.2,2.2 7.1,3.2Z" fill="#e5a11f"/><path d="M1.2,13 C1.2,10.4 2.8,9.2 5.4,9.2 C8,9.2 9.7,10.4 9.7,13 Z" fill="#3b8be3"/><circle cx="1.5" cy="12" r="1" fill="#ef9746"/><circle cx="9.4" cy="12" r="1" fill="#ef9746"/><circle cx="5.2" cy="7.3" r="2.3" fill="#f9d0a4"/><path d="M2.8,7.3 C2.7,5.3 3.9,4.6 5.2,4.6 C6.6,4.6 7.7,5.3 7.6,7.3 C6.8,6.2 3.8,6.2 2.8,7.3Z" fill="#98532e"/></svg><svg class="ic5m" width="14" height="10" viewBox="0 0 14 10"><defs><linearGradient id="mg" x1="0" y1="0" x2="0" y2="1"><stop offset="0" stop-color="#f2f7fe"/><stop offset="1" stop-color="#d4e4f8"/></linearGradient></defs><rect x="0.6" y="0.6" width="12.4" height="8.4" rx="1" fill="url(#mg)" stroke="#5d91d8" stroke-width="1.1"/><path d="M1.3,1.3 L6.8,5.6 L12.3,1.3" fill="none" stroke="#86b0e6" stroke-width="0.9"/><path d="M1.3,8.4 L5,5 M12.3,8.4 L8.6,5" fill="none" stroke="#b9d2f2" stroke-width="0.6"/></svg><div class="c c6"><span>{{patient.anrede}}, leider musste Ihr Termin bei {{professional.name}} am {{old_appointment.date}} ...</span></div></div>
<div class="row " style="top:346px;height:20px"><svg class="ic0" width="12" height="12" viewBox="0 0 12 12"><circle cx="6" cy="6" r="5.4" fill="url(#rg)" stroke="#e3776f" stroke-width="0.7"/><rect x="3.4" y="5.15" width="5.2" height="1.7" fill="#fff"/></svg><div class="c c1"><span>Terminverschiebung SMS</span></div><div class="c c2 ta it"><span>alle</span></div><svg class="ic4" width="15" height="14" viewBox="0 0 15 14"><path d="M7.6,8.5 C7.6,6.2 8.8,5.3 10.8,5.3 C12.8,5.3 14,6.2 14,8.5 Z" fill="#56b04d"/><circle cx="13.6" cy="8.2" r="0.9" fill="#f0a050"/><circle cx="9.5" cy="3.2" r="2.3" fill="#f8cf9f"/><path d="M7.1,3.2 C7,1.3 8.2,0.5 9.5,0.5 C10.9,0.5 12,1.3 11.9,3.2 C11,2.2 8.2,2.2 7.1,3.2Z" fill="#e5a11f"/><path d="M1.2,13 C1.2,10.4 2.8,9.2 5.4,9.2 C8,9.2 9.7,10.4 9.7,13 Z" fill="#3b8be3"/><circle cx="1.5" cy="12" r="1" fill="#ef9746"/><circle cx="9.4" cy="12" r="1" fill="#ef9746"/><circle cx="5.2" cy="7.3" r="2.3" fill="#f9d0a4"/><path d="M2.8,7.3 C2.7,5.3 3.9,4.6 5.2,4.6 C6.6,4.6 7.7,5.3 7.6,7.3 C6.8,6.2 3.8,6.2 2.8,7.3Z" fill="#98532e"/></svg><svg class="ic5s" width="8" height="13" viewBox="0 0 8 13"><rect x="5.6" y="0" width="2" height="3.5" rx="0.5" fill="#777"/><rect x="0.6" y="1.6" width="6.8" height="10.4" rx="1.2" fill="#c6c6c6" stroke="#8e8e8e" stroke-width="0.7"/><rect x="1.6" y="2.8" width="4.6" height="3" rx="0.4" fill="#3b9ff2"/><rect x="2.8" y="3.9" width="2.2" height="0.8" fill="#d6ecff"/><rect x="1.6" y="6.9" width="1.5" height="0.9" fill="#66c466"/><rect x="4.8" y="6.9" width="1.5" height="0.9" fill="#e86868"/><rect x="1.6" y="8.7" width="4.6" height="2.3" fill="#b8b8b8"/></svg><div class="c c6"><span>Termin am {{old_appointment.date}}, {{old_appointment.time}} wurde verschoben auf {{appointment.date...</span></div></div>
<div class="grp" style="top:366px;height:25px"><svg class="coll" width="7" height="7" viewBox="0 0 7 7" style="top:9px"><defs><linearGradient id="cg" x1="0" y1="0" x2="0" y2="1"><stop offset="0" stop-color="#fbfcfe"/><stop offset="1" stop-color="#cfdcf3"/></linearGradient></defs><rect x="0.5" y="0.5" width="6" height="6" rx="0.8" fill="url(#cg)" stroke="#5b6781"/><rect x="1.5" y="3" width="4" height="1" fill="#3c4660"/></svg><span style="top:7px">Nachrichtenvorlage für: Terminverzögerung</span></div>
<div class="row " style="top:391px;height:21px"><svg class="ic0" width="12" height="12" viewBox="0 0 12 12"><circle cx="6" cy="6" r="5.4" fill="url(#rg)" stroke="#e3776f" stroke-width="0.7"/><rect x="3.4" y="5.15" width="5.2" height="1.7" fill="#fff"/></svg><div class="c c1"><span>Terminverzögerung E-Mail</span></div><div class="c c2 ta it"><span>alle</span></div><svg class="ic4" width="15" height="14" viewBox="0 0 15 14"><path d="M7.6,8.5 C7.6,6.2 8.8,5.3 10.8,5.3 C12.8,5.3 14,6.2 14,8.5 Z" fill="#56b04d"/><circle cx="13.6" cy="8.2" r="0.9" fill="#f0a050"/><circle cx="9.5" cy="3.2" r="2.3" fill="#f8cf9f"/><path d="M7.1,3.2 C7,1.3 8.2,0.5 9.5,0.5 C10.9,0.5 12,1.3 11.9,3.2 C11,2.2 8.2,2.2 7.1,3.2Z" fill="#e5a11f"/><path d="M1.2,13 C1.2,10.4 2.8,9.2 5.4,9.2 C8,9.2 9.7,10.4 9.7,13 Z" fill="#3b8be3"/><circle cx="1.5" cy="12" r="1" fill="#ef9746"/><circle cx="9.4" cy="12" r="1" fill="#ef9746"/><circle cx="5.2" cy="7.3" r="2.3" fill="#f9d0a4"/><path d="M2.8,7.3 C2.7,5.3 3.9,4.6 5.2,4.6 C6.6,4.6 7.7,5.3 7.6,7.3 C6.8,6.2 3.8,6.2 2.8,7.3Z" fill="#98532e"/></svg><svg class="ic5m" width="14" height="10" viewBox="0 0 14 10"><defs><linearGradient id="mg" x1="0" y1="0" x2="0" y2="1"><stop offset="0" stop-color="#f2f7fe"/><stop offset="1" stop-color="#d4e4f8"/></linearGradient></defs><rect x="0.6" y="0.6" width="12.4" height="8.4" rx="1" fill="url(#mg)" stroke="#5d91d8" stroke-width="1.1"/><path d="M1.3,1.3 L6.8,5.6 L12.3,1.3" fill="none" stroke="#86b0e6" stroke-width="0.9"/><path d="M1.3,8.4 L5,5 M12.3,8.4 L8.6,5" fill="none" stroke="#b9d2f2" stroke-width="0.6"/></svg><div class="c c6"><span>{{patient.anrede}}, wir möchten Ihnen die Wartezeit in unserem Wartezimmer ein wenig ersparen und i...</span></div></div>
<div class="row " style="top:412px;height:20px"><svg class="ic0" width="12" height="12" viewBox="0 0 12 12"><circle cx="6" cy="6" r="5.4" fill="url(#rg)" stroke="#e3776f" stroke-width="0.7"/><rect x="3.4" y="5.15" width="5.2" height="1.7" fill="#fff"/></svg><div class="c c1"><span>Terminverzögerung SMS</span></div><div class="c c2 ta it"><span>alle</span></div><svg class="ic4" width="15" height="14" viewBox="0 0 15 14"><path d="M7.6,8.5 C7.6,6.2 8.8,5.3 10.8,5.3 C12.8,5.3 14,6.2 14,8.5 Z" fill="#56b04d"/><circle cx="13.6" cy="8.2" r="0.9" fill="#f0a050"/><circle cx="9.5" cy="3.2" r="2.3" fill="#f8cf9f"/><path d="M7.1,3.2 C7,1.3 8.2,0.5 9.5,0.5 C10.9,0.5 12,1.3 11.9,3.2 C11,2.2 8.2,2.2 7.1,3.2Z" fill="#e5a11f"/><path d="M1.2,13 C1.2,10.4 2.8,9.2 5.4,9.2 C8,9.2 9.7,10.4 9.7,13 Z" fill="#3b8be3"/><circle cx="1.5" cy="12" r="1" fill="#ef9746"/><circle cx="9.4" cy="12" r="1" fill="#ef9746"/><circle cx="5.2" cy="7.3" r="2.3" fill="#f9d0a4"/><path d="M2.8,7.3 C2.7,5.3 3.9,4.6 5.2,4.6 C6.6,4.6 7.7,5.3 7.6,7.3 C6.8,6.2 3.8,6.2 2.8,7.3Z" fill="#98532e"/></svg><svg class="ic5s" width="8" height="13" viewBox="0 0 8 13"><rect x="5.6" y="0" width="2" height="3.5" rx="0.5" fill="#777"/><rect x="0.6" y="1.6" width="6.8" height="10.4" rx="1.2" fill="#c6c6c6" stroke="#8e8e8e" stroke-width="0.7"/><rect x="1.6" y="2.8" width="4.6" height="3" rx="0.4" fill="#3b9ff2"/><rect x="2.8" y="3.9" width="2.2" height="0.8" fill="#d6ecff"/><rect x="1.6" y="6.9" width="1.5" height="0.9" fill="#66c466"/><rect x="4.8" y="6.9" width="1.5" height="0.9" fill="#e86868"/><rect x="1.6" y="8.7" width="4.6" height="2.3" fill="#b8b8b8"/></svg><div class="c c6"><span>Leider verschiebt sich Ihr heutiger Termin von {{old_appointment.time}} auf {{appointment.time}}.</span></div></div>
  </div>
  <div id="vs">
    <svg width="15" height="446" viewBox="0 0 15 446" style="position:absolute;left:0;top:0"><path d="M4,9 L7.5,5.5 L11,9 Z" fill="#a8a8a8"/><rect x="3" y="13" width="10" height="413" fill="#c1c1c1"/><path d="M4,438 L11,438 L7.5,441.5 Z" fill="#333"/></svg>
  </div>
  <div id="pbar">
    <svg class="pic" width="14" height="13" viewBox="0 0 14 13" style="left:3px;top:4px"><path d="M3.6,5.2 C4.6,2 8.6,1.4 10.4,4.2" fill="none" stroke="#2a84e8" stroke-width="2.3"/><polygon points="12.9,2.4 12.7,7.2 8.4,5.6" fill="#2a84e8"/><path d="M10.4,7.8 C9.4,11 5.4,11.6 3.6,8.8" fill="none" stroke="#2a84e8" stroke-width="2.3"/><polygon points="1.1,10.6 1.3,5.8 5.6,7.4" fill="#3a8eec"/><circle cx="11" cy="5.2" r="0.8" fill="#a9dcff"/><circle cx="3" cy="7.8" r="0.8" fill="#a9dcff"/></svg>
  </div>
</div>
</body></html>
